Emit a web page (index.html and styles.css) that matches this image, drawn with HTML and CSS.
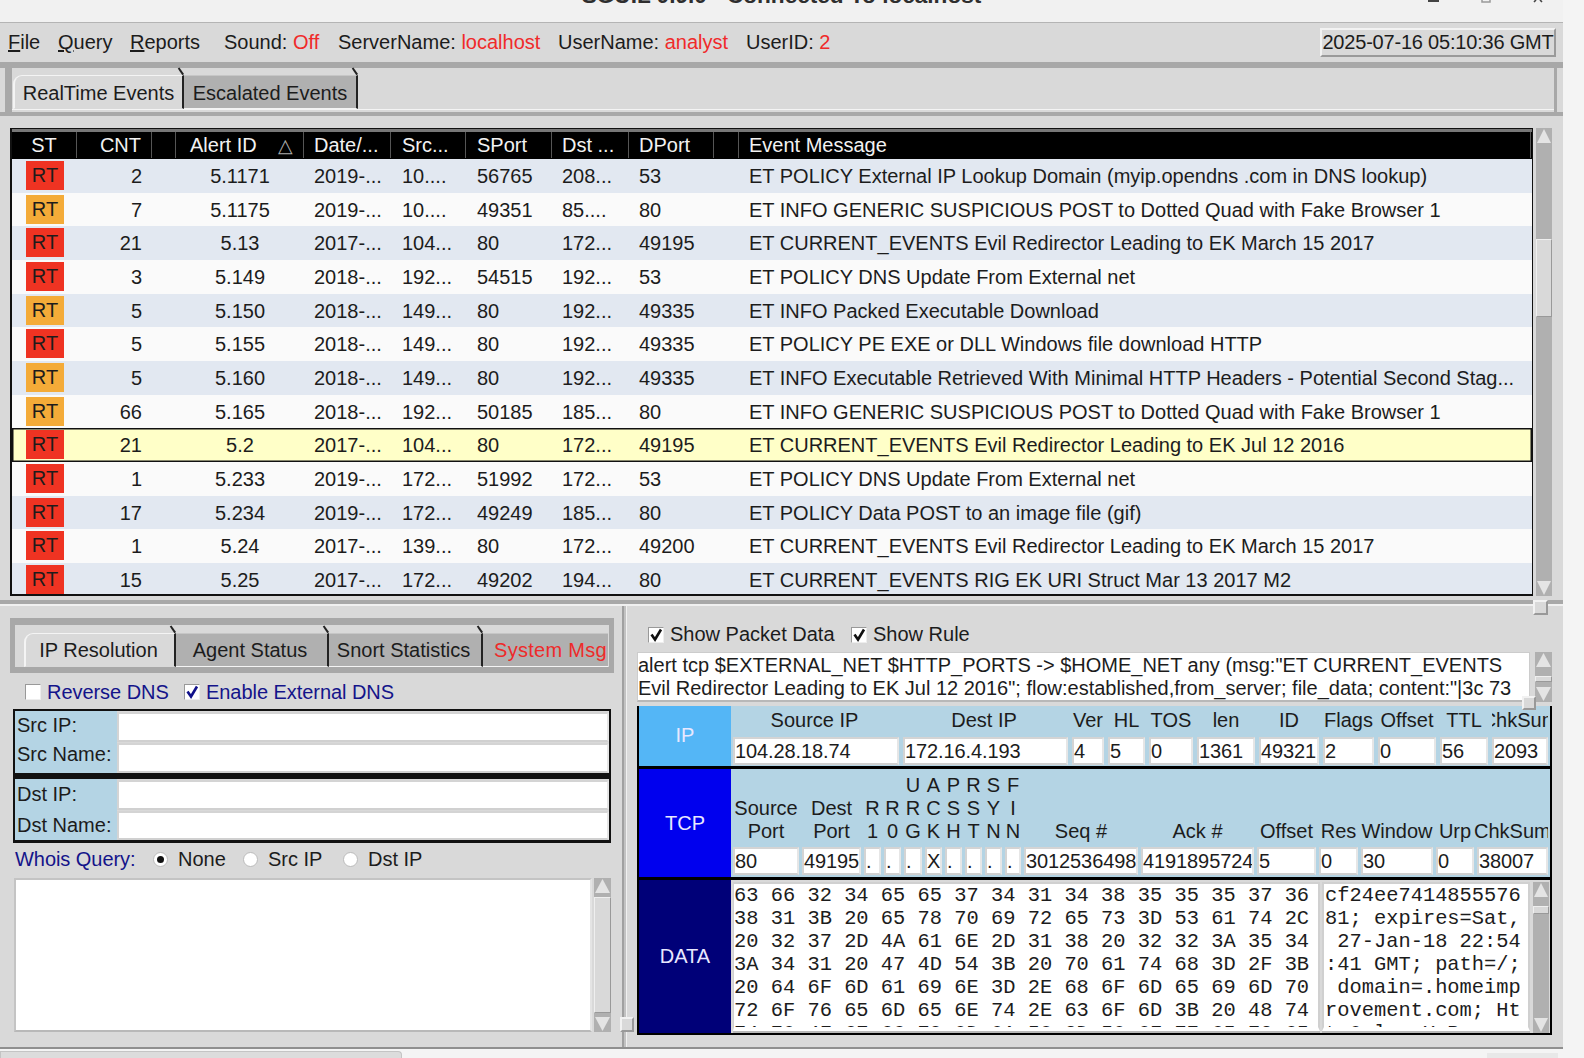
FILE: index.html
```html
<!DOCTYPE html>
<html lang="en">
<head>
  <meta charset="UTF-8" />
  <title>SGUIL 0.9.0 - Connected To localhost</title>
  <link rel="stylesheet" href="styles.css">
</head>
<body>
<div class="window">

  <!-- title bar, cut off at the top of the screen -->
  <div class="titlebar">
    <span></span>
    <span class="title">SGUIL 0.9.0 - Connected To localhost</span>
    <div class="wincontrols">
      <svg width="14" height="4"><rect x="1" y="0" width="11" height="2" fill="#444"/></svg>
      <svg width="14" height="4"><path d="M3 0v2h8V0" fill="none" stroke="#999" stroke-width="1.5"/></svg>
      <svg width="14" height="4"><path d="M3 2l2-2M11 2L9 0" fill="none" stroke="#444" stroke-width="1.6"/></svg>
    </div>
  </div>

  <div class="menubar">
    <span class="menu w50"><u>F</u>ile</span>
    <span class="menu w72"><u>Q</u>uery</span>
    <span class="menu w94"><u>R</u>eports</span>
    <span class="stat w114">Sound: <b>Off</b></span>
    <span class="stat w220">ServerName: <b>localhost</b></span>
    <span class="stat w188">UserName: <b>analyst</b></span>
    <span class="stat">UserID: <b>2</b></span>
    <span class="clock">2025-07-16 05:10:36 GMT</span>
  </div>

  <div class="main-tabs">
    <div class="tabs-inner">
      <div class="tab active w171">RealTime Events</div>
      <div class="tab w174">Escalated Events</div>
    </div>
  </div>

  <div class="events-pane">
    <div class="events">
      <div class="row head">
        <span class="c-mid">ST</span><span class="c-right">CNT</span><span></span>
        <span class="c-alert">Alert ID<i class="sort">&#9651;</i></span>
        <span>Date/...</span><span>Src...</span><span>SPort</span><span>Dst ...</span><span>DPort</span><span></span><span>Event Message</span>
      </div>
      <div class="row"><span class="c-mid"><em class="rt red">RT</em></span><span class="c-right">2</span><span></span><span class="c-mid">5.1171</span><span>2019-...</span><span>10....</span><span>56765</span><span>208...</span><span>53</span><span></span><span>ET POLICY External IP Lookup Domain (myip.opendns .com in DNS lookup)</span></div>
      <div class="row"><span class="c-mid"><em class="rt orange">RT</em></span><span class="c-right">7</span><span></span><span class="c-mid">5.1175</span><span>2019-...</span><span>10....</span><span>49351</span><span>85....</span><span>80</span><span></span><span>ET INFO GENERIC SUSPICIOUS POST to Dotted Quad with Fake Browser 1</span></div>
      <div class="row"><span class="c-mid"><em class="rt red">RT</em></span><span class="c-right">21</span><span></span><span class="c-mid">5.13</span><span>2017-...</span><span>104...</span><span>80</span><span>172...</span><span>49195</span><span></span><span>ET CURRENT_EVENTS Evil Redirector Leading to EK March 15 2017</span></div>
      <div class="row"><span class="c-mid"><em class="rt red">RT</em></span><span class="c-right">3</span><span></span><span class="c-mid">5.149</span><span>2018-...</span><span>192...</span><span>54515</span><span>192...</span><span>53</span><span></span><span>ET POLICY DNS Update From External net</span></div>
      <div class="row"><span class="c-mid"><em class="rt orange">RT</em></span><span class="c-right">5</span><span></span><span class="c-mid">5.150</span><span>2018-...</span><span>149...</span><span>80</span><span>192...</span><span>49335</span><span></span><span>ET INFO Packed Executable Download</span></div>
      <div class="row"><span class="c-mid"><em class="rt red">RT</em></span><span class="c-right">5</span><span></span><span class="c-mid">5.155</span><span>2018-...</span><span>149...</span><span>80</span><span>192...</span><span>49335</span><span></span><span>ET POLICY PE EXE or DLL Windows file download HTTP</span></div>
      <div class="row"><span class="c-mid"><em class="rt orange">RT</em></span><span class="c-right">5</span><span></span><span class="c-mid">5.160</span><span>2018-...</span><span>149...</span><span>80</span><span>192...</span><span>49335</span><span></span><span>ET INFO Executable Retrieved With Minimal HTTP Headers - Potential Second Stag...</span></div>
      <div class="row"><span class="c-mid"><em class="rt orange">RT</em></span><span class="c-right">66</span><span></span><span class="c-mid">5.165</span><span>2018-...</span><span>192...</span><span>50185</span><span>185...</span><span>80</span><span></span><span>ET INFO GENERIC SUSPICIOUS POST to Dotted Quad with Fake Browser 1</span></div>
      <div class="row selected"><span class="c-mid"><em class="rt red">RT</em></span><span class="c-right">21</span><span></span><span class="c-mid">5.2</span><span>2017-...</span><span>104...</span><span>80</span><span>172...</span><span>49195</span><span></span><span>ET CURRENT_EVENTS Evil Redirector Leading to EK Jul 12 2016</span></div>
      <div class="row"><span class="c-mid"><em class="rt red">RT</em></span><span class="c-right">1</span><span></span><span class="c-mid">5.233</span><span>2019-...</span><span>172...</span><span>51992</span><span>172...</span><span>53</span><span></span><span>ET POLICY DNS Update From External net</span></div>
      <div class="row"><span class="c-mid"><em class="rt red">RT</em></span><span class="c-right">17</span><span></span><span class="c-mid">5.234</span><span>2019-...</span><span>172...</span><span>49249</span><span>185...</span><span>80</span><span></span><span>ET POLICY Data POST to an image file (gif)</span></div>
      <div class="row"><span class="c-mid"><em class="rt red">RT</em></span><span class="c-right">1</span><span></span><span class="c-mid">5.24</span><span>2017-...</span><span>139...</span><span>80</span><span>172...</span><span>49200</span><span></span><span>ET CURRENT_EVENTS Evil Redirector Leading to EK March 15 2017</span></div>
      <div class="row"><span class="c-mid"><em class="rt red">RT</em></span><span class="c-right">15</span><span></span><span class="c-mid">5.25</span><span>2017-...</span><span>172...</span><span>49202</span><span>194...</span><span>80</span><span></span><span>ET CURRENT_EVENTS RIG EK URI Struct Mar 13 2017 M2</span></div>
    </div>
    <div class="scrollbar sb-events">
      <div class="arrow up"></div>
      <div class="track"><div class="gap g-111"></div><div class="slider s-78"></div></div>
      <div class="arrow down"></div>
    </div>
  </div>

  <!-- horizontal sash with its handle -->
  <div class="hsash"><div class="handle h-main"></div></div>

  <div class="lower">

    <div class="left-pane">
      <div class="sub-tabs">
        <div class="tabs-inner">
          <div class="tab active w152 nudge">IP Resolution</div>
          <div class="tab w153 nudge">Agent Status</div>
          <div class="tab w154 nudge">Snort Statistics</div>
          <div class="tab w125 last alert">System Msg</div>
        </div>
      </div>

      <div class="dns-row">
        <label class="check-item navy w159"><i class="box"></i>Reverse DNS</label>
        <label class="check-item navy"><i class="box"><svg width="14" height="14" viewBox="0 0 14 14"><path d="M2.5 6.5l3.5 5 6-10" fill="none" stroke="#10108a" stroke-width="2.6"/></svg></i>Enable External DNS</label>
      </div>

      <div class="resolve">
        <div class="res-line"><span class="res-label">Src IP:</span><span class="entry"></span></div>
        <div class="res-line"><span class="res-label src-name">Src Name:</span><span class="entry"></span></div>
      </div>
      <div class="resolve second">
        <div class="res-line"><span class="res-label">Dst IP:</span><span class="entry"></span></div>
        <div class="res-line"><span class="res-label">Dst Name:</span><span class="entry"></span></div>
      </div>

      <div class="whois-row">
        <span class="navy w138">Whois Query:</span>
        <label class="radio-item w90"><i class="radio on"></i>None</label>
        <label class="radio-item w100"><i class="radio"></i>Src IP</label>
        <label class="radio-item"><i class="radio"></i>Dst IP</label>
      </div>

      <div class="whois-box">
        <div class="whois-text"></div>
        <div class="scrollbar sb-whois">
          <div class="arrow up"></div>
          <div class="track"><div class="slider fill"></div></div>
          <div class="arrow down"></div>
        </div>
      </div>
    </div>

    <div class="vsash"><div class="handle h-v"></div></div>

    <div class="right-pane">
      <div class="show-row">
        <label class="check-item dark w203"><i class="box"><svg width="14" height="14" viewBox="0 0 14 14"><path d="M2.5 6.5l3.5 5 6-10" fill="none" stroke="#111" stroke-width="2.6"/></svg></i>Show Packet Data</label>
        <label class="check-item dark"><i class="box"><svg width="14" height="14" viewBox="0 0 14 14"><path d="M2.5 6.5l3.5 5 6-10" fill="none" stroke="#111" stroke-width="2.6"/></svg></i>Show Rule</label>
      </div>

      <div class="rule-wrap">
        <div class="rule">alert tcp $EXTERNAL_NET $HTTP_PORTS -&gt; $HOME_NET any (msg:"ET CURRENT_EVENTS<br>Evil Redirector Leading to EK Jul 12 2016"; flow:established,from_server; file_data; content:"|3c 73</div>
        <div class="scrollbar sb-rule">
          <div class="arrow up"></div>
          <div class="track"><div class="gap g-8"></div><div class="slider s-6"></div></div>
          <div class="arrow down"></div>
        </div>
        <div class="handle h-rule"></div>
      </div>

      <div class="packet">
        <div class="proto ip-row">
          <div class="proto-name ip">IP</div>
          <div class="fields ip-fields">
            <span class="lbl">Source IP</span><span class="lbl">Dest IP</span><span class="lbl">Ver</span><span class="lbl">HL</span><span class="lbl">TOS</span><span class="lbl">len</span><span class="lbl">ID</span><span class="lbl">Flags</span><span class="lbl">Offset</span><span class="lbl">TTL</span><span class="lbl">ChkSum</span>
            <span class="entry">104.28.18.74</span><span class="entry">172.16.4.193</span><span class="entry">4</span><span class="entry">5</span><span class="entry">0</span><span class="entry">1361</span><span class="entry">49321</span><span class="entry">2</span><span class="entry">0</span><span class="entry">56</span><span class="entry">2093</span>
          </div>
        </div>
        <div class="proto tcp-row">
          <div class="proto-name tcp">TCP</div>
          <div class="fields tcp-fields">
            <span class="lbl">Source<br>Port</span><span class="lbl">Dest<br>Port</span><span class="lbl">R<br>1</span><span class="lbl">R<br>0</span><span class="lbl">U<br>R<br>G</span><span class="lbl">A<br>C<br>K</span><span class="lbl">P<br>S<br>H</span><span class="lbl">R<br>S<br>T</span><span class="lbl">S<br>Y<br>N</span><span class="lbl">F<br>I<br>N</span><span class="lbl">Seq #</span><span class="lbl">Ack #</span><span class="lbl">Offset</span><span class="lbl">Res</span><span class="lbl">Window</span><span class="lbl">Urp</span><span class="lbl lbl-wide">ChkSum</span>
            <span class="entry">80</span><span class="entry">49195</span><span class="entry">.</span><span class="entry">.</span><span class="entry">.</span><span class="entry">X</span><span class="entry">.</span><span class="entry">.</span><span class="entry">.</span><span class="entry">.</span><span class="entry">3012536498</span><span class="entry">4191895724</span><span class="entry">5</span><span class="entry">0</span><span class="entry">30</span><span class="entry">0</span><span class="entry">38007</span>
          </div>
        </div>
        <div class="proto data-row">
          <div class="proto-name data">DATA</div>
          <div class="data-fields">
            <pre class="hex">63 66 32 34 65 65 37 34 31 34 38 35 35 35 37 36
38 31 3B 20 65 78 70 69 72 65 73 3D 53 61 74 2C
20 32 37 2D 4A 61 6E 2D 31 38 20 32 32 3A 35 34
3A 34 31 20 47 4D 54 3B 20 70 61 74 68 3D 2F 3B
20 64 6F 6D 61 69 6E 3D 2E 68 6F 6D 65 69 6D 70
72 6F 76 65 6D 65 6E 74 2E 63 6F 6D 3B 20 48 74
74 70 4F 6E 6C 79 0D 0A 58 2D 50 6F 77 65 72 65</pre>
            <pre class="ascii">cf24ee7414855576
81; expires=Sat,
 27-Jan-18 22:54
:41 GMT; path=/;
 domain=.homeimp
rovement.com; Ht
tpOnly..X-Powere</pre>
            <div class="scrollbar sb-data">
              <div class="arrow up"></div>
              <div class="track"><div class="gap g-8"></div><div class="slider s-8"></div></div>
              <div class="arrow down"></div>
            </div>
          </div>
        </div>
      </div>
    </div>
  </div>
</div>

<div class="footer">
  <div class="foot-left"></div>
  <div class="foot-right"></div>
</div>
</body>
</html>
```
FILE: styles.css
```css
* { box-sizing: border-box; }

html, body {
  margin: 0;
  height: 100%;
  overflow: hidden;
}

body {
  width: 1584px;
  height: 1058px;
  background: #f4f4f4;
  color: #1c1c1c;
  font-family: "Liberation Sans", Arial, sans-serif;
  font-size: 20px;
}

.window {
  width: 1563px;
  height: 1047px;
  background: #d9d9d9;
  display: flex;
  flex-direction: column;
}

/* title bar */
.titlebar {
  height: 22px;
  flex: none;
  background: #f1f1f1;
  overflow: hidden;
  display: grid;
  grid-template-columns: 1fr auto 1fr;
}

.title {
  font-weight: bold;
  font-size: 22.6px;
  line-height: 24px;
  height: 24px;
  margin-top: -16px;
  color: #2e2e2e;
}

.wincontrols {
  display: flex;
  justify-content: flex-end;
  gap: 38px;
  padding-right: 18px;
}

/* menu row */
.menubar {
  height: 40px;
  flex: none;
  border-top: 1px solid #b4b4b4;
  display: flex;
  align-items: center;
  padding-left: 8px;
}

.menu, .stat { white-space: nowrap; }
.stat b { font-weight: normal; color: #f02a2a; }
.w50 { width: 50px; }
.w72 { width: 72px; }
.w94 { width: 94px; }
.w114 { width: 114px; }
.w220 { width: 220px; }
.w188 { width: 188px; }
.w159 { width: 159px; }
.w138 { width: 138px; }
.w90 { width: 90px; }
.w100 { width: 100px; }
.w203 { width: 203px; }

.clock {
  margin-left: auto;
  margin-right: 7px;
  height: 29px;
  width: 236px;
  line-height: 25px;
  text-align: center;
  white-space: nowrap;
  letter-spacing: -0.2px;
  border: 2px solid;
  border-color: #f2f2f2 #9a9a9a #9a9a9a #f2f2f2;
}

/* notebook tabs */
.main-tabs {
  flex: none;
  height: 54px;
  background: #d9d9d9;
  border-top: 6px solid #a8a8a8;
  border-bottom: 4px solid #a8a8a8;
  padding-left: 5px;
  padding-right: 6px;
}

.tabs-inner {
  height: 100%;
  display: flex;
  align-items: flex-end;
}

.main-tabs .tabs-inner {
  background: linear-gradient(to top, #d9d9d9 2px, #f4f4f4 2px, #f4f4f4 3px, #d9d9d9 3px);
  border-left: 7px solid #a8a8a8;
  border-right: 3px solid #a8a8a8;
  padding-left: 1px;
  padding-bottom: 3px;
}

.main-tabs .tab { line-height: 35px; }

.tab {
  position: relative;
  height: 34px;
  flex: none;
  background: #b0b0b0;
  border-top: 1px solid #c6c6c6;
  border-right: 2px solid #222;
  border-bottom: 1px solid #f4f4f4;
  text-align: center;
  line-height: 33px;
  white-space: nowrap;
}

.tab::after {
  content: "";
  position: absolute;
  right: -2px;
  top: -2px;
  width: 8px;
  height: 2px;
  background: #222;
  transform: rotate(55deg);
  transform-origin: right top;
}

.tab.active {
  background: #d9d9d9;
  border-top: 1px solid #f4f4f4;
  border-left: 2px solid #f4f4f4;
  border-bottom-color: #d9d9d9;
  border-top-left-radius: 9px;
}

.nudge { padding-right: 3px; }

.tab.last {
  border-right: none;
  overflow: hidden;
  text-align: left;
  padding-left: 11px;
  letter-spacing: 0.3px;
}

.tab.last::after { display: none; }
.alert { color: #ee2a2a; }
.w171 { width: 171px; }
.w174 { width: 174px; }
.w152 { width: 152px; }
.w153 { width: 153px; }
.w154 { width: 154px; }
.w125 { width: 125px; }

/* events table */
.events-pane {
  flex: none;
  height: 484px;
  padding: 12px 0 4px 10px;
  display: flex;
}

.events {
  width: 1523px;
  height: 468px;
  border: 2px solid #111;
  border-top-width: 1px;
  border-right-width: 1px;
  overflow: hidden;
  background: #fff;
}

.row {
  display: grid;
  grid-template-columns: 65px 75px 24px 128px 87px 75px 86px 77px 85px 25px 792px;
  height: 33.67px;
  line-height: 34px;
  background: #fafafa;
  white-space: nowrap;
}

.row:nth-child(even) { background: #e2e8f1; }

.row > span {
  overflow: hidden;
  padding-left: 11px;
}

.row > span:nth-child(5),
.row > span:nth-child(8),
.row > span:nth-child(9),
.row > span:nth-child(11) { padding-left: 10px; }

.row > .c-mid { padding-left: 0; text-align: center; }
.row > .c-right { padding-left: 0; padding-right: 10px; text-align: right; }

.row.head {
  height: 30px;
  background: #000;
  color: #f2f2f2;
  border-top: 3px solid #777;
  border-bottom: 1px solid #000;
}

.row.head > span { border-right: 1px solid #555; line-height: 27px; }
.row.head > .c-alert { padding-left: 14px; }
.sort { font-style: normal; margin-left: 21px; color: #aaa; font-size: 19px; }

.row.selected {
  background: #ffffc8;
  box-shadow: inset 0 0 0 1.5px #111;
}

.rt {
  display: block;
  width: 38px;
  height: 29px;
  margin: 2px 0 0 14px;
  line-height: 29px;
  font-style: normal;
  text-align: center;
  color: #1c1c1c;
}

.red { background: #ef3322; }
.orange { background: #f4ab38; }

/* scrollbars */
.scrollbar {
  display: flex;
  flex-direction: column;
  background: #b0b0b0;
  flex: none;
}

.track {
  flex: 1;
  min-height: 0;
  display: flex;
  flex-direction: column;
}

.arrow { height: 16px; flex: none; position: relative; background: #b0b0b0; }

.arrow::before {
  content: "";
  position: absolute;
  left: 1px;
  right: 1px;
  top: 1px;
  bottom: 1px;
  background: #e4e4e4;
}

.arrow.up::before { clip-path: polygon(50% 0, 100% 100%, 0 100%); }
.arrow.down::before { clip-path: polygon(0 0, 100% 0, 50% 100%); }

.slider {
  background: #d9d9d9;
  border: 1px solid;
  border-color: #efefef #999 #999 #efefef;
}

.slider.fill { flex: 1; margin: 3px 0; }
.g-111 { height: 95px; flex: none; }
.g-8 { height: 8px; flex: none; }
.s-78 { height: 78px; flex: none; }
.s-6 { height: 6px; flex: none; }
.s-8 { height: 8px; flex: none; }

.sb-events { width: 16px; height: 468px; margin-left: 3px; }

/* sashes */
.hsash {
  flex: none;
  height: 6px;
  position: relative;
  background: #a8a8a8;
  border-bottom: 2px solid #f0f0f0;
}

.handle {
  position: absolute;
  width: 15px;
  height: 15px;
  background: #d9d9d9;
  border: 2px solid;
  border-color: #f2f2f2 #999 #999 #f2f2f2;
}

.h-main { left: 1533px; top: 0; }

.lower {
  flex: 1;
  min-height: 0;
  display: flex;
}

.left-pane {
  width: 622px;
  flex: none;
  padding-left: 10px;
  display: flex;
  flex-direction: column;
}

.vsash {
  width: 5px;
  flex: none;
  position: relative;
  background: #c2c2c2;
  border-left: 2px solid #a0a0a0;
  border-right: 1px solid #f0f0f0;
}

.h-v { left: -4px; top: 411px; width: 14px; }

.right-pane {
  flex: 1;
  min-width: 0;
  padding-left: 10px;
  display: flex;
  flex-direction: column;
}

/* left pane */
.sub-tabs {
  flex: none;
  width: 604px;
  height: 55px;
  margin-top: 12px;
  background: #d9d9d9;
  border: 7px solid #a8a8a8;
  border-bottom-width: 0;
  border-left-width: 5px;
  border-right-width: 5px;
}

.sub-tabs .tabs-inner {
  border-bottom: 6px solid #a8a8a8;
  padding-left: 9px;
}

.dns-row {
  flex: none;
  height: 36px;
  display: flex;
  align-items: center;
  padding-left: 15px;
  padding-top: 2px;
}

.check-item {
  display: flex;
  align-items: center;
  gap: 6px;
  white-space: nowrap;
}

.box {
  width: 16px;
  height: 16px;
  background: #fff;
  border: 1px solid;
  border-color: #999 #eee #eee #999;
  display: flex;
  align-items: center;
  justify-content: center;
}

.navy { color: #14148a; letter-spacing: -0.05px; }
.dark { color: #1c1c1c; }

.resolve {
  flex: none;
  width: 598px;
  height: 66px;
  margin-left: 3px;
  background: linear-gradient(to right, #b4d4e4 102px, #d9d9d9 102px);
  border: 2px solid #111;
  padding-top: 1px;
  display: flex;
  flex-direction: column;
  gap: 1px;
}

.resolve.second {
  height: 68px;
  border-top: 4px solid #111;
  border-bottom-width: 3px;
}

.res-line {
  display: flex;
  flex: 1;
  min-height: 0;
}

.res-label {
  width: 102px;
  flex: none;
  padding-left: 2px;
  line-height: 27px;
  white-space: nowrap;
}

.res-label.src-name { line-height: 22px; }
.second .res-label { line-height: 29px; }

.res-line .entry { flex: 1; }

.entry {
  display: block;
  background: #fff;
  border: 2px solid #dadada;
  border-color: #d4d4d4 #e6e6e6 #d0d0d0 #d4d4d4;
  line-height: 25px;
  letter-spacing: -0.1px;
  white-space: nowrap;
  overflow: hidden;
}

.whois-row {
  flex: none;
  height: 35px;
  display: flex;
  align-items: center;
  padding-left: 5px;
  padding-bottom: 2px;
}

.radio-item {
  display: flex;
  align-items: center;
  gap: 10px;
  white-space: nowrap;
}

.radio {
  width: 15px;
  height: 15px;
  border-radius: 50%;
  background: #fff;
  border: 1px solid #bbb;
  display: flex;
  align-items: center;
  justify-content: center;
}

.radio.on::before {
  content: "";
  width: 7px;
  height: 7px;
  border-radius: 50%;
  background: #111;
}

.whois-box {
  flex: none;
  width: 597px;
  height: 154px;
  margin-left: 4px;
  display: flex;
  gap: 2px;
}

.whois-text {
  flex: 1;
  background: #fff;
  border: 2px solid #cfcfcf;
  border-color: #c4c4c4 #e4e4e4 #b8b8b8 #c4c4c4;
}

.sb-whois { width: 17px; }

/* right pane */
.show-row {
  flex: none;
  height: 46px;
  display: flex;
  align-items: center;
  padding-left: 11px;
  padding-top: 11px;
}

.rule-wrap {
  flex: none;
  position: relative;
  height: 54px;
  display: flex;
  gap: 5px;
  width: 915px;
  padding-bottom: 4px;
}

.rule {
  width: 893px;
  height: 50px;
  background: #fff;
  border: 1px solid #ccc;
  border-bottom: 2px solid #b8b8b8;
  line-height: 23px;
  padding-top: 1px;
  white-space: nowrap;
  overflow: hidden;
}

.sb-rule { width: 17px; height: 50px; }
.h-rule { left: 885px; top: 44px; width: 14px; height: 14px; }

.packet {
  flex: none;
  width: 915px;
  height: 329px;
  background: #000;
  border: 2px solid #000;
  border-top: 0;
  display: flex;
  flex-direction: column;
  gap: 3px;
}

.proto {
  display: flex;
  flex: none;
  background: #b4d4e4;
}

.ip-row { height: 60px; }
.tcp-row { height: 108px; }
.data-row { height: 153px; background: #d9d9d9; }

.proto-name {
  width: 92px;
  flex: none;
  display: flex;
  align-items: center;
  justify-content: center;
  color: #e8e8ff;
}

.proto-name.ip { background: #54b6f6; padding-bottom: 2px; }
.proto-name.tcp { background: #0000ee; }
.proto-name.data { background: #000078; }

.fields {
  display: grid;
  padding-left: 2px;
  flex: 1;
  min-width: 0;
  overflow: hidden;
}

.ip-fields {
  grid-template-columns: 166px 165px 32px 37px 44px 58px 60px 51px 58px 48px 56px;
  grid-template-rows: 31px 28px;
  column-gap: 4px;
}

.tcp-fields {
  grid-template-columns: 66px 59px 17px 17px 18px 17px 17px 17px 17px 16px 114px 113px 59px 39px 72px 38px 71px;
  grid-template-rows: 78px 28px;
  column-gap: 3px;
}

.lbl {
  display: flex;
  align-items: flex-end;
  justify-content: center;
  text-align: center;
  line-height: 23px;
  overflow: hidden;
  white-space: nowrap;
}

.ip-fields .lbl { align-items: center; padding-bottom: 2px; }
.ip-fields .lbl:nth-child(-n+2) { padding-right: 3px; }
.tcp-fields .lbl { padding-bottom: 4px; }
.tcp-fields .lbl-wide { justify-content: flex-start; margin-left: -3px; }

.data-fields {
  flex: 1;
  min-width: 0;
  display: flex;
  padding-left: 2px;
  padding-top: 2px;
  overflow: hidden;
}

.hex, .ascii {
  margin: 0;
  height: 149px;
  background: #fff;
  border: 2px solid #d0d0d0;
  border-bottom: 4px solid #fff;
  box-shadow: 0 2px 0 #b8b8b8;
  font-family: "Liberation Mono", "DejaVu Sans Mono", monospace;
  font-size: 20.4px;
  line-height: 23px;
  overflow: hidden;
}

.hex { width: 587px; border-left-width: 1px; }
.ascii { width: 208px; margin-left: 2px; padding-left: 1px; }
.sb-data { width: 16px; height: 151px; margin-left: 3px; }

/* strip under the window */
.footer {
  height: 11px;
  border-top: 2px solid #8f8f8f;
  width: 1563px;
  display: flex;
  justify-content: space-between;
  align-items: flex-end;
}

.foot-left {
  width: 402px;
  height: 7px;
  background: #dcdcdc;
  border: 1px solid #c4c4c4;
  border-bottom: 0;
  border-top-right-radius: 4px;
}

.foot-right {
  width: 71px;
  height: 5px;
  margin-right: 5px;
  background: #e8e8e8;
}
```
